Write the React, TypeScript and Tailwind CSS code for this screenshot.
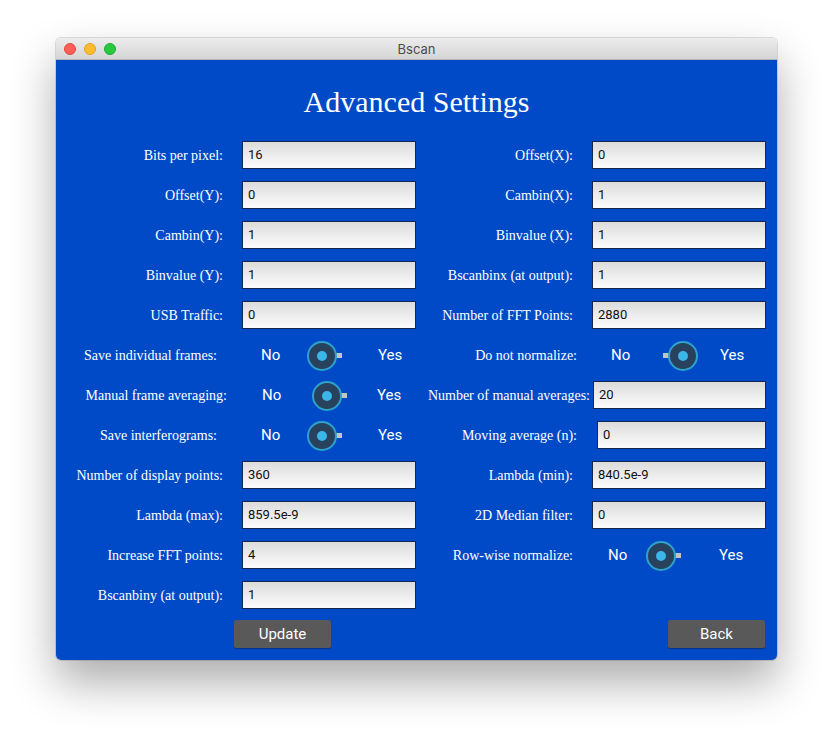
import React from "react";

const labelCls =
  "font-['Liberation_Serif',serif] text-[14px] leading-none text-white whitespace-nowrap mt-[2px]";
const inputCls =
  "h-[28px] border border-[#14284e] bg-linear-to-b from-[#dcdcdc] to-[#fcfcfc] pl-[5px] flex items-center font-['Roboto',sans-serif] text-[13px] text-[#111] leading-none";
const ynCls = "font-['Roboto',sans-serif] text-[15px] leading-none text-white";

function Field({ value, cls = "w-[174px]" }: { value: string; cls?: string }) {
  return (
    <div className={`${inputCls} ${cls}`}>
      <span className="-mt-[2px]">{value}</span>
    </div>
  );
}

function Knob({ nub }: { nub: "left" | "right" }) {
  return (
    <div className="relative w-[30px] h-[30px] mt-[2px] shrink-0">
      {nub === "left" ? (
        <div className="absolute left-[-5px] top-[12px] w-[6px] h-[5px] bg-[#c4c4c4]" />
      ) : (
        <div className="absolute right-[-5px] top-[12px] w-[6px] h-[5px] bg-[#c4c4c4]" />
      )}
      <div className="absolute inset-0 rounded-full border-2 border-[#2ea3c9] bg-[#28425e] flex items-center justify-center">
        <div className="w-[10px] h-[10px] rounded-full bg-[#3bb6e8]" />
      </div>
    </div>
  );
}

function Label({ text, cls }: { text: string; cls: string }) {
  return (
    <div className={`shrink-0 flex justify-end ${cls}`}>
      <span className={labelCls}>{text}</span>
    </div>
  );
}

function Row({ left, right }: { left: React.ReactNode; right: React.ReactNode }) {
  return (
    <div className="flex h-[28px] items-center">
      <div className="w-[360px] shrink-0 flex items-center h-full">{left}</div>
      <div className="flex-1 flex items-center h-full">{right}</div>
    </div>
  );
}

function LF({ label, value }: { label: string; value: string }) {
  return (
    <>
      <Label text={label} cls="w-[167px]" />
      <div className="ml-[19px]">
        <Field value={value} />
      </div>
    </>
  );
}

function RF({ label, value }: { label: string; value: string }) {
  return (
    <>
      <Label text={label} cls="w-[157px]" />
      <div className="ml-[19px]">
        <Field value={value} />
      </div>
    </>
  );
}

export default function App() {
  return (
    <div className="w-full h-[734px] bg-white overflow-hidden">
      <div className="ml-[56px] mt-[38px] w-[721px] rounded-[5px] overflow-hidden shadow-[0_0_0_1px_rgba(0,0,0,0.12),0_22px_45px_rgba(0,0,0,0.33)]">
        {/* Title bar */}
        <div className="h-[22px] bg-linear-to-b from-[#ececec] to-[#d5d5d5] border-b border-[#b4b4b4] flex items-center relative">
          <div className="flex items-center gap-[8px] pl-[8px] pt-[1px]">
            <div className="w-[12px] h-[12px] rounded-full bg-[#fe5f57] border border-[#e1473f]" />
            <div className="w-[12px] h-[12px] rounded-full bg-[#febc2e] border border-[#dfa023]" />
            <div className="w-[12px] h-[12px] rounded-full bg-[#28c840] border border-[#1eaa32]" />
          </div>
          <div className="absolute inset-0 flex items-center justify-center pt-[2px] font-['Inter',sans-serif] text-[13px] text-[#4c4c4c]">
            Bscan
          </div>
        </div>
        {/* Content */}
        <div className="bg-[#004ac8] h-[600px] flex flex-col">
          <div className="h-[81px] flex items-center justify-center pt-[3px]">
            <h1 className="font-['Liberation_Serif',serif] text-[30px] leading-none text-white">
              Advanced Settings
            </h1>
          </div>
          <div className="flex flex-col gap-[12px]">
            <Row left={<LF label="Bits per pixel:" value="16" />} right={<RF label="Offset(X):" value="0" />} />
            <Row left={<LF label="Offset(Y):" value="0" />} right={<RF label="Cambin(X):" value="1" />} />
            <Row left={<LF label="Cambin(Y):" value="1" />} right={<RF label="Binvalue (X):" value="1" />} />
            <Row left={<LF label="Binvalue (Y):" value="1" />} right={<RF label="Bscanbinx (at output):" value="1" />} />
            <Row left={<LF label="USB Traffic:" value="0" />} right={<RF label="Number of FFT Points:" value="2880" />} />
            {/* Row 6 */}
            <Row
              left={
                <>
                  <Label text="Save individual frames:" cls="w-[161px]" />
                  <div className="ml-[25px] flex items-center w-[174px]">
                    <span className={`${ynCls} ml-[19px] w-[46px]`}>No</span>
                    <Knob nub="right" />
                    <span className={`${ynCls} ml-[41px]`}>Yes</span>
                  </div>
                </>
              }
              right={
                <>
                  <Label text="Do not normalize:" cls="w-[161px]" />
                  <div className="ml-[15px] flex items-center w-[174px]">
                    <span className={`${ynCls} ml-[19px] w-[57px]`}>No</span>
                    <Knob nub="left" />
                    <span className={`${ynCls} ml-[22px]`}>Yes</span>
                  </div>
                </>
              }
            />
            {/* Row 7 */}
            <Row
              left={
                <>
                  <Label text="Manual frame averaging:" cls="w-[171px]" />
                  <div className="ml-[15px] flex items-center w-[174px]">
                    <span className={`${ynCls} ml-[20px] w-[50px]`}>No</span>
                    <Knob nub="right" />
                    <span className={`${ynCls} ml-[35px]`}>Yes</span>
                  </div>
                </>
              }
              right={
                <>
                  <Label text="Number of manual averages:" cls="w-[174px]" />
                  <div className="ml-[3px]">
                    <Field value="20" cls="w-[173px]" />
                  </div>
                </>
              }
            />
            {/* Row 8 */}
            <Row
              left={
                <>
                  <Label text="Save interferograms:" cls="w-[161px]" />
                  <div className="ml-[25px] flex items-center w-[174px]">
                    <span className={`${ynCls} ml-[19px] w-[46px]`}>No</span>
                    <Knob nub="right" />
                    <span className={`${ynCls} ml-[41px]`}>Yes</span>
                  </div>
                </>
              }
              right={
                <>
                  <Label text="Moving average (n):" cls="w-[161px]" />
                  <div className="ml-[20px]">
                    <Field value="0" cls="w-[169px]" />
                  </div>
                </>
              }
            />
            <Row left={<LF label="Number of display points:" value="360" />} right={<RF label="Lambda (min):" value="840.5e-9" />} />
            <Row left={<LF label="Lambda (max):" value="859.5e-9" />} right={<RF label="2D Median filter:" value="0" />} />
            {/* Row 11 */}
            <Row
              left={<LF label="Increase FFT points:" value="4" />}
              right={
                <>
                  <Label text="Row-wise normalize:" cls="w-[157px]" />
                  <div className="ml-[19px] flex items-center w-[174px]">
                    <span className={`${ynCls} ml-[16px] w-[38px]`}>No</span>
                    <Knob nub="right" />
                    <span className={`${ynCls} ml-[43px]`}>Yes</span>
                  </div>
                </>
              }
            />
            <Row left={<LF label="Bscanbiny (at output):" value="1" />} right={<div />} />
          </div>
          {/* Buttons */}
          <div className="flex mt-[11px]">
            <button className="ml-[178px] w-[97px] h-[28px] bg-[#595959] rounded-[2px] shadow-[0_1px_1px_rgba(0,0,0,0.35)] font-['Roboto',sans-serif] text-[15px] text-white">
              Update
            </button>
            <button className="ml-[337px] w-[97px] h-[28px] bg-[#595959] rounded-[2px] shadow-[0_1px_1px_rgba(0,0,0,0.35)] font-['Roboto',sans-serif] text-[15px] text-white">
              Back
            </button>
          </div>
        </div>
      </div>
    </div>
  );
}
